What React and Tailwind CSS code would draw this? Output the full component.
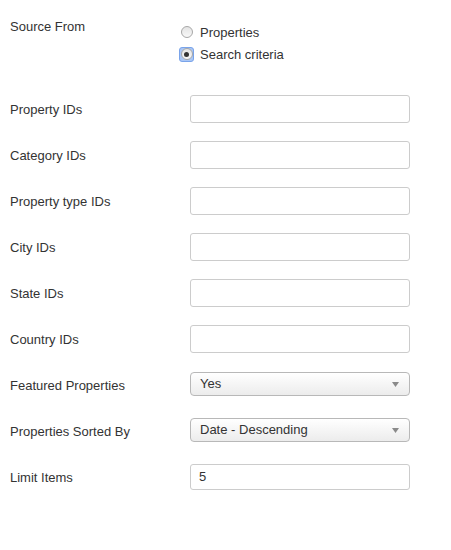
import React, { useState } from 'react';

const textRows = ['Property IDs', 'Category IDs', 'Property type IDs', 'City IDs', 'State IDs', 'Country IDs'];

function Radio({ checked, label, onClick }) {
  return (
    <div className="flex items-center h-[22px] cursor-pointer" onClick={onClick}>
      <span className={`w-[15px] h-[15px] ml-[179px] flex items-center justify-center rounded-[3px] ${checked ? 'bg-[#a9c6f5] border border-[#7aa4ea]' : ''}`}>
        <span className="w-[12px] h-[12px] rounded-full border border-[#a7a7a7] bg-gradient-to-b from-[#e4e4e4] to-[#f8f8f8] flex items-center justify-center">
          {checked && <span className="w-[5px] h-[5px] rounded-full bg-[#333]" />}
        </span>
      </span>
      <span className="ml-[6px] pt-[1px] text-[13px] text-[#333]">{label}</span>
    </div>
  );
}

function Select({ value }) {
  return (
    <div className="w-[220px] h-[24px] -mt-[2px] rounded-[4px] border border-[#b8b8b8] bg-gradient-to-b from-white to-[#ececec] flex items-center justify-between pl-[9px] pr-[10px] text-[13px] text-[#333]">
      <span>{value}</span>
      <svg width="7" height="5" viewBox="0 0 7 5"><path d="M0 0h7L3.5 5z" fill="#8a8a8a" /></svg>
    </div>
  );
}

export default function App() {
  const [source, setSource] = useState('search');

  return (
    <div className="w-[451px] h-[550px] bg-white text-[#333] text-[13px]" style={{ fontFamily: '"Liberation Sans", Arial, sans-serif' }}>
      <div className="relative h-[86px]">
        <div className="absolute left-[10px] top-[17px]">Source From</div>
        <div className="pt-[21px]">
          <Radio label="Properties" checked={source === 'props'} onClick={() => setSource('props')} />
          <Radio label="Search criteria" checked={source === 'search'} onClick={() => setSource('search')} />
        </div>
      </div>

      {textRows.map(label => (
        <div key={label} className="flex items-center h-[46px]">
          <div className="w-[190px] pl-[10px] pt-[2px]">{label}</div>
          <input className="w-[220px] h-[28px] rounded-[3px] border border-[#ccc] bg-white outline-none px-[8px]" />
        </div>
      ))}

      <div className="flex items-center h-[46px]">
        <div className="w-[190px] pl-[10px] pt-[2px]">Featured Properties</div>
        <Select value="Yes" />
      </div>
      <div className="flex items-center h-[46px]">
        <div className="w-[190px] pl-[10px] pt-[2px]">Properties Sorted By</div>
        <Select value="Date - Descending" />
      </div>
      <div className="flex items-center h-[46px]">
        <div className="w-[190px] pl-[10px] pt-[2px]">Limit Items</div>
        <input defaultValue="5" className="w-[220px] h-[26px] -mt-[1px] rounded-[3px] border border-[#ccc] bg-white outline-none px-[8px] text-[13px] text-[#333]" />
      </div>
    </div>
  );
}
